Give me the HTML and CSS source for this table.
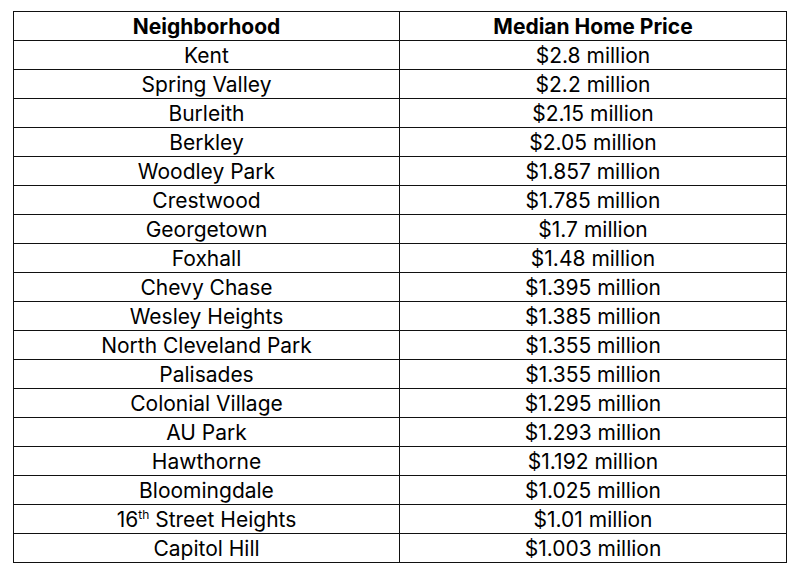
FILE: index.html
```html
<!DOCTYPE html>
<html>
<head>
<meta charset="utf-8">
<link rel="stylesheet" href="styles.css">
</head>
<body>
<table class="prices">
  <colgroup><col class="c1"><col class="c2"></colgroup>
  <thead>
    <tr><th>Neighborhood</th><th>Median Home Price</th></tr>
  </thead>
  <tbody>
    <tr><td>Kent</td><td>$2.8 million</td></tr>
    <tr><td>Spring Valley</td><td>$2.2 million</td></tr>
    <tr><td>Burleith</td><td>$2.15 million</td></tr>
    <tr><td>Berkley</td><td>$2.05 million</td></tr>
    <tr><td>Woodley Park</td><td>$1.857 million</td></tr>
    <tr><td>Crestwood</td><td>$1.785 million</td></tr>
    <tr><td>Georgetown</td><td>$1.7 million</td></tr>
    <tr><td>Foxhall</td><td>$1.48 million</td></tr>
    <tr><td>Chevy Chase</td><td>$1.395 million</td></tr>
    <tr><td>Wesley Heights</td><td>$1.385 million</td></tr>
    <tr><td>North Cleveland Park</td><td>$1.355 million</td></tr>
    <tr><td>Palisades</td><td>$1.355 million</td></tr>
    <tr><td>Colonial Village</td><td>$1.295 million</td></tr>
    <tr><td>AU Park</td><td>$1.293 million</td></tr>
    <tr><td>Hawthorne</td><td>$1.192 million</td></tr>
    <tr><td>Bloomingdale</td><td>$1.025 million</td></tr>
    <tr><td>16<sup>th</sup> Street Heights</td><td>$1.01 million</td></tr>
    <tr><td>Capitol Hill</td><td>$1.003 million</td></tr>
  </tbody>
</table>
</body>
</html>
```
FILE: styles.css
```css
html, body {
  margin: 0;
  padding: 0;
  background: #fff;
}
body {
  padding: 11px 0 0 13px;
  font-family: Inter, "Noto Sans", sans-serif;
  color: #000;
}
.prices {
  border-collapse: collapse;
  width: 773px;
  table-layout: fixed;
}
.c1 { width: 386px; }
.c2 { width: 387px; }
.prices th,
.prices td {
  border: 1px solid #111;
  height: 27px;
  padding: 1px 0 0;
  text-align: center;
  vertical-align: middle;
  font-size: 21px;
  line-height: 27px;
}
.prices th {
  font-weight: 700;
}
.prices td {
  font-weight: 400;
}
.prices sup {
  font-size: 12px;
  line-height: 0;
  vertical-align: 8px;
}
```
